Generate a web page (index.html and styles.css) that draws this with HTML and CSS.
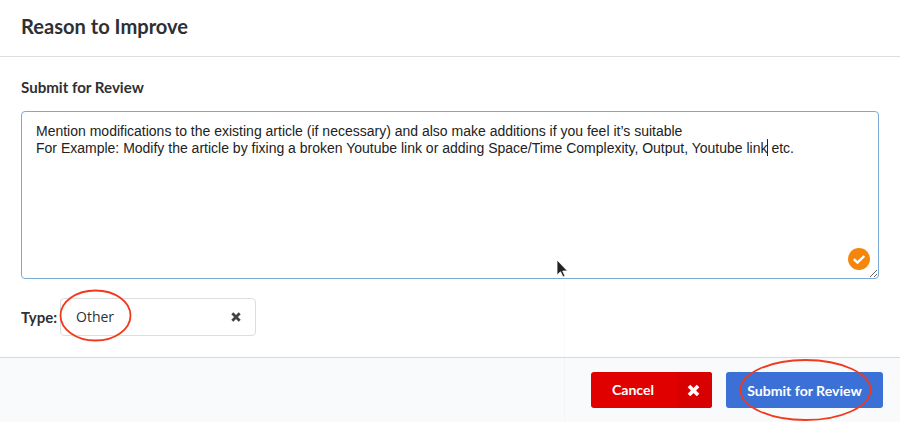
FILE: index.html
```html
<!DOCTYPE html>
<html lang="en">
	<head>
		<meta charset="UTF-8" />
		<title>Reason to Improve</title>
		<link rel="stylesheet" href="styles.css">
	</head>
	<body>
		<div class="modal">
			<div class="modal-head">
				<h1>Reason to Improve</h1>
			</div>
			<div class="modal-body">
				<label class="field-title" for="reason">Submit for Review</label>
				<div class="text-wrap">
					<textarea id="reason" readonly>Mention modifications to the existing article (if necessary) and also make additions if you feel it’s suitable
For Example: Modify the article by fixing a broken Youtube link or adding Space/Time Complexity, Output, Youtube link etc.</textarea>
					<span class="caret"></span>
					<svg class="check" width="22" height="22" viewBox="0 0 22 22">
						<circle cx="11" cy="11" r="11" fill="#f5860b" />
						<path d="M5.800 11.200l3.700 3.500 6.800-6.700" fill="none" stroke="#fff" stroke-width="2.400" />
					</svg>
				</div>
				<div class="type-row">
					<b>Type:</b>
					<div class="select">
						<span>Other</span>
						<svg width="10" height="10" viewBox="0 0 10 10">
							<path d="M1.300 1.300l7.400 7.400M8.700 1.300l-7.400 7.400" stroke="#444" stroke-width="2.800" />
						</svg>
					</div>
				</div>
			</div>
			<div class="modal-foot">
				<button class="btn-cancel">
					<span class="btn-label">Cancel</span>
					<span class="btn-icon">
						<svg width="13" height="13" viewBox="0 0 12 12">
							<path d="M1.800 1.800l8.400 8.400M10.200 1.800l-8.400 8.400" stroke="#fff" stroke-width="3.400" />
						</svg>
					</span>
				</button>
				<button class="btn-submit">Submit for Review</button>
			</div>
		</div>

		<!-- marks drawn over the screenshot -->
		<div class="seam"></div>
		<svg class="marks" width="900" height="422" viewBox="0 0 900 422">
			<ellipse cx="95.500" cy="315.500" rx="35" ry="25" />
			<ellipse cx="805.500" cy="390" rx="65" ry="30" />
		</svg>
		<svg class="pointer" width="14" height="20" viewBox="0 0 14 20">
			<path d="M1 1v15l3.500-3.200 2.500 5.200 2-1-2.300-5h4.800z" fill="#222" stroke="#fff" stroke-width="0.800" />
		</svg>
	</body>
</html>
```

FILE: styles.css
```css
html,
body {
	margin: 0;
	height: 422px;
	overflow: hidden;
	background: #fff;
}

body {
	position: relative;
	color: #2f3033;
	font-family: "Lato", sans-serif;
}

.modal {
	display: flex;
	flex-direction: column;
	height: 422px;
}

.modal-head {
	height: 56px;
	padding: 0 21px;
	display: flex;
	align-items: center;
	border-bottom: 1px solid #dedede;
}

.modal-head h1 {
	margin: 0 0 5px;
	font-size: 20.100px;
	font-weight: 700;
}

.modal-body {
	flex: 1;
	padding: 20px 21px 0;
}

.field-title {
	display: block;
	font-size: 15.100px;
	font-weight: 700;
	line-height: 20px;
	margin-bottom: 14px;
}

.text-wrap {
	position: relative;
	height: 168px;
}

textarea {
	display: block;
	box-sizing: border-box;
	width: 100%;
	height: 168px;
	padding: 11px 14px;
	border: 1px solid #7aa9d8;
	border-radius: 4px;
	outline: none;
	color: #222;
	font-family: "Liberation Sans", sans-serif;
	font-size: 14px;
	line-height: 17px;
}

.caret {
	position: absolute;
	left: 746px;
	top: 28px;
	width: 1px;
	height: 17px;
	background: #222;
}

.check {
	position: absolute;
	right: 9px;
	bottom: 9px;
}

.type-row {
	display: flex;
	align-items: center;
	gap: 3px;
	margin-top: 19px;
	font-size: 15px;
}

.select {
	box-sizing: border-box;
	width: 196px;
	height: 38px;
	padding: 0 14px 2px 15px;
	display: flex;
	align-items: center;
	justify-content: space-between;
	border: 1px solid #ddd;
	border-radius: 4px;
	font-family: "Open Sans", sans-serif;
	font-size: 14px;
}

.select svg {
	margin-top: 2px;
}

.modal-foot {
	height: 65px;
	box-sizing: border-box;
	padding: 14px 17px 0 0;
	display: flex;
	justify-content: flex-end;
	align-items: flex-start;
	gap: 14px;
	background: #f9fafc;
	border-top: 1px solid #d9d9d9;
}

button {
	height: 36px;
	border: none;
	border-radius: 3px;
	color: #fff;
	font-family: "Lato", sans-serif;
	font-size: 14.100px;
	font-weight: 700;
	padding: 0;
}

.btn-cancel {
	width: 121px;
	display: flex;
	background: #e00000;
}

.btn-label {
	flex: 1;
	line-height: 36px;
	padding-right: 2px;
}

.btn-icon {
	width: 35px;
	height: 36px;
	padding-right: 2px;
	box-sizing: border-box;
	display: flex;
	align-items: center;
	justify-content: center;
	background: #d80000;
	border-radius: 0 3px 3px 0;
}

.btn-submit {
	width: 157px;
	background: #3b70d6;
}

.seam {
	position: absolute;
	left: 564px;
	top: 280px;
	width: 1px;
	height: 142px;
	background: rgba(0, 0, 0, 0.02);
}

.marks {
	position: absolute;
	left: 0;
	top: 0;
}

.marks ellipse {
	fill: none;
	stroke: #f2391c;
	stroke-width: 1.800;
}

.pointer {
	position: absolute;
	left: 556px;
	top: 259px;
}
```
